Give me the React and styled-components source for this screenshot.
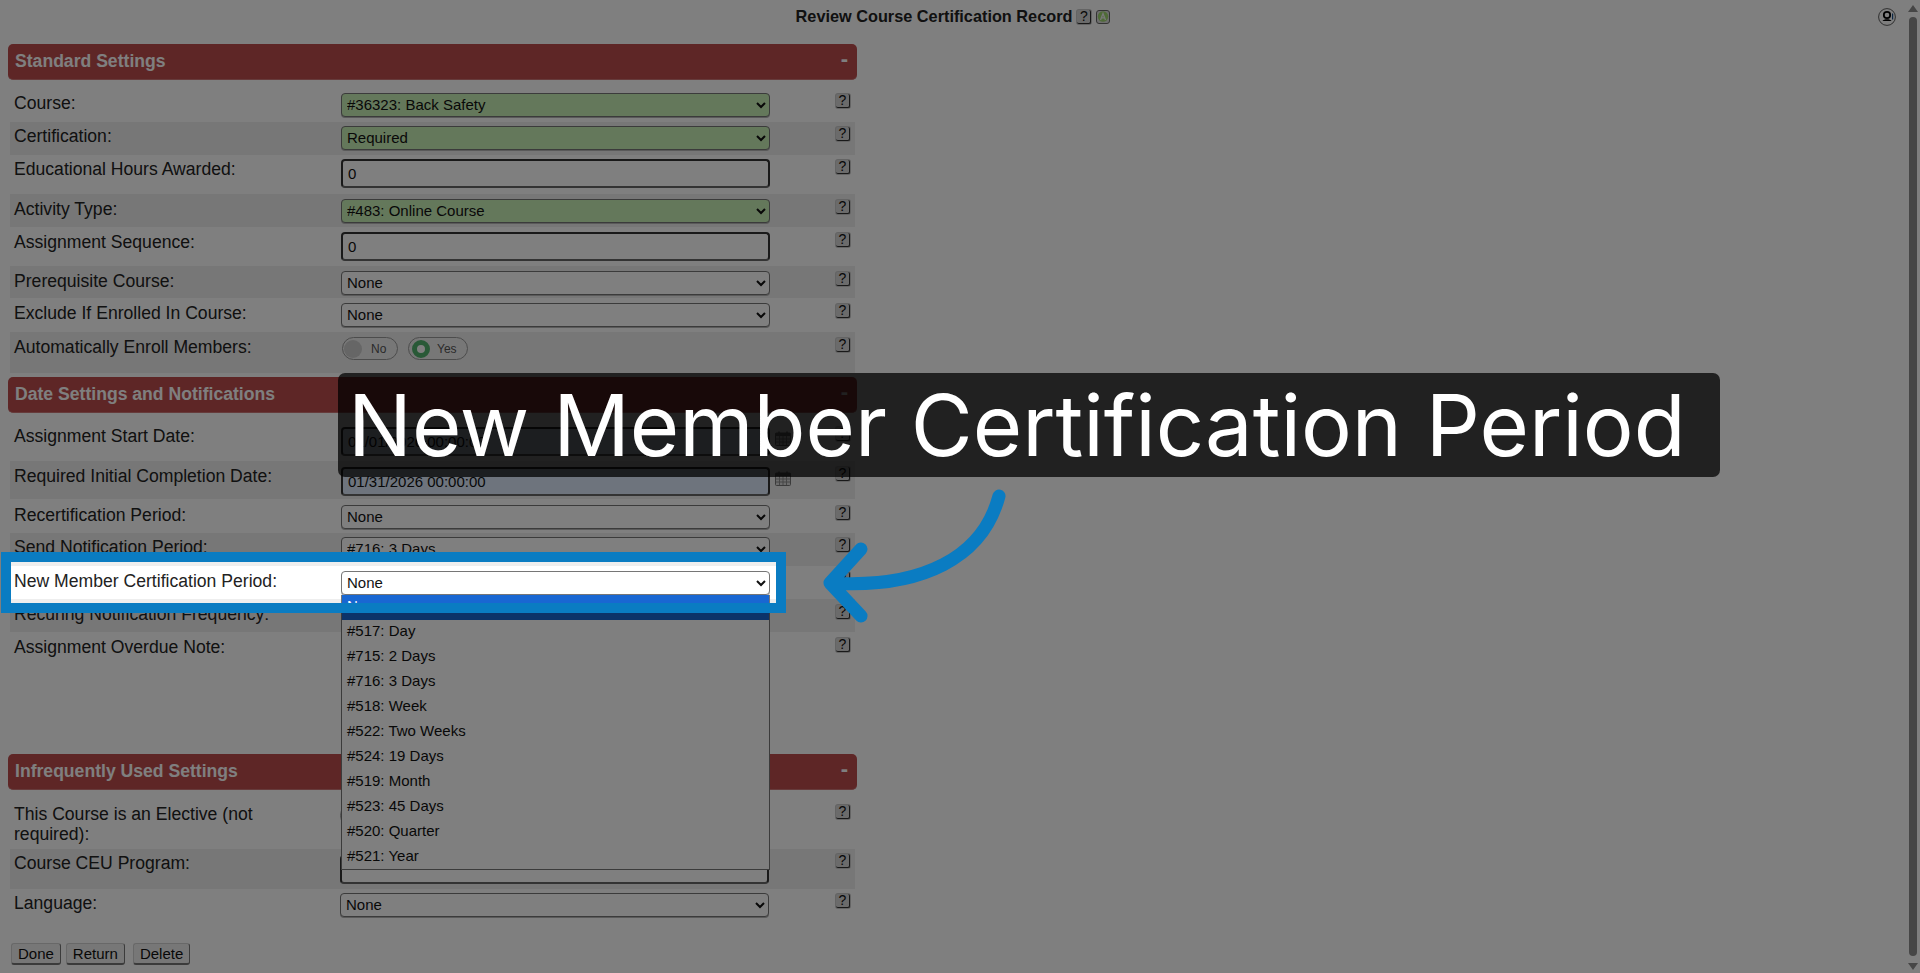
import styled, { createGlobalStyle } from "styled-components";

const GlobalStyle = createGlobalStyle`
  html, body {
    margin: 0;
    padding: 0;
    height: 100%;
    overflow: hidden;
    background: #ffffff;
    font-family: "Liberation Sans", Arial, sans-serif;
    color: #222222;
  }
`;

const standardRows = [
  { label: "Course:", kind: "select", value: "#36323: Back Safety", green: true, h: 33, pad: 4 },
  { label: "Certification:", kind: "select", value: "Required", green: true, h: 33, pad: 4, alt: true },
  { label: "Educational Hours Awarded:", kind: "input", value: "0", h: 39, pad: 4 },
  { label: "Activity Type:", kind: "select", value: "#483: Online Course", green: true, h: 33, pad: 5, alt: true },
  { label: "Assignment Sequence:", kind: "input", value: "0", h: 39, pad: 5 },
  { label: "Prerequisite Course:", kind: "select", value: "None", h: 32, pad: 5, alt: true },
  { label: "Exclude If Enrolled In Course:", kind: "select", value: "None", h: 34, pad: 5 },
  { label: "Automatically Enroll Members:", kind: "toggle", h: 41, pad: 5, alt: true },
];

const dateRows = [
  { label: "Assignment Start Date:", kind: "date", value: "01/01/2026 00:00:00", h: 40, pad: 5 },
  { label: "Required Initial Completion Date:", kind: "date", value: "01/31/2026 00:00:00", h: 38, pad: 5, alt: true },
  { label: "Recertification Period:", kind: "select", value: "None", h: 34, pad: 6 },
  { label: "Send Notification Period:", kind: "select", value: "#716: 3 Days", h: 33, pad: 4, alt: true },
  { label: "New Member Certification Period:", kind: "open", value: "None", h: 33, pad: 5 },
  { label: "Recuring Notification Frequency:", kind: "select", value: "None", h: 33, pad: 5, alt: true },
  { label: "Assignment Overdue Note:", kind: "textarea", h: 113, pad: 5 },
];

const infrequentRows = [
  { label: "This Course is an Elective (not required):", kind: "toggle", h: 50, pad: 5, labelW: 329 },
  { label: "Course CEU Program:", kind: "input", value: "", h: 40, pad: 4, alt: true, nudge: 2, labelW: 330 },
  { label: "Language:", kind: "select", value: "None", h: 32, pad: 4, labelW: 330 },
];

const periodOptions = [
  "None",
  "#517: Day",
  "#715: 2 Days",
  "#716: 3 Days",
  "#518: Week",
  "#522: Two Weeks",
  "#524: 19 Days",
  "#519: Month",
  "#523: 45 Days",
  "#520: Quarter",
  "#521: Year",
];

const HelpButton = ({ inline }) => <Help $inline={inline}>?</Help>;

const CalendarIcon = () => (
  <CalendarSvg viewBox="0 0 16 15">
    <rect x="0.5" y="2" width="15" height="12.5" rx="1" fill="#d8d8d8" stroke="#777" />
    <rect x="0.5" y="2" width="15" height="3" fill="#777" />
    <path d="M4 0.5v3M12 0.5v3" stroke="#777" strokeWidth="1.5" />
    <path d="M1 8h14M1 11h14M4.5 5v9M8 5v9M11.5 5v9" stroke="#8c8c8c" strokeWidth="1" />
  </CalendarSvg>
);

const Control = ({ row }) => {
  if (row.kind === "toggle") {
    return (
      <ToggleGroup>
        <Toggle>
          <Knob />
          No
        </Toggle>
        <Toggle $wide>
          <Knob $on />
          Yes
        </Toggle>
      </ToggleGroup>
    );
  }
  if (row.kind === "input") {
    return <TextInput defaultValue={row.value} style={row.nudge ? { marginTop: row.nudge } : undefined} />;
  }
  if (row.kind === "date") {
    return (
      <DateWrap>
        <TextInput $date defaultValue={row.value} />
        <CalendarIcon />
      </DateWrap>
    );
  }
  if (row.kind === "textarea") {
    return <NoteArea />;
  }
  return (
    <SelectWrap>
      <Select $green={row.green} defaultValue={row.value}>
        <option>{row.value}</option>
      </Select>
      {row.kind === "open" && (
        <OptionList>
          {periodOptions.map((option, index) => (
            <OptionItem key={option} $active={index === 0}>
              {option}
            </OptionItem>
          ))}
        </OptionList>
      )}
    </SelectWrap>
  );
};

const Section = ({ title, rows, gap }) => (
  <>
    <SectionHeader>
      <span>{title}</span>
      <Collapse>-</Collapse>
    </SectionHeader>
    <Rows $gap={gap}>
      {rows.map((row) => (
        <Row key={row.label} $alt={row.alt} $h={row.h} $pad={row.pad}>
          <Label $w={row.labelW}>{row.label}</Label>
          <Control row={row} />
          <HelpButton />
        </Row>
      ))}
    </Rows>
  </>
);

const App = () => {
  return (
    <Page>
      <GlobalStyle />
      <TopBar>
        <Title>Review Course Certification Record</Title>
        <HelpButton inline />
        <BadgeIcon viewBox="0 0 14 14">
          <rect x="0.5" y="0.5" width="13" height="13" rx="2.5" fill="#dcdcdc" stroke="#666" />
          <circle cx="7" cy="6.5" r="5.2" fill="#9fd66f" />
          <path d="M4.5 10L7 3.5L9.5 10M5.5 7.8h3" fill="none" stroke="#f2f2f2" strokeWidth="1.3" />
        </BadgeIcon>
        <AccountIcon viewBox="0 0 18 18">
          <circle cx="9" cy="9" r="8.4" fill="none" stroke="#333" strokeWidth="0.8" />
          <circle cx="9" cy="7" r="3.2" fill="none" stroke="#000" strokeWidth="1.8" />
          <path d="M4.5 13c1-2.5 8-2.5 9 0z" fill="#000" />
          <path d="M14.6 5.5v6" stroke="#1a4f8a" strokeWidth="1.2" />
        </AccountIcon>
      </TopBar>

      <Form>
        <Section title="Standard Settings" rows={standardRows} gap={9} />
        <SectionSpacer $h={4} />
        <Section title="Date Settings and Notifications" rows={dateRows} gap={8} />
        <SectionSpacer $h={9} />
        <Section title="Infrequently Used Settings" rows={infrequentRows} gap={9} />
        <Actions>
          <ActionButton>Done</ActionButton>
          <ActionButton>Return</ActionButton>
          <ActionButton $ml={3}>Delete</ActionButton>
        </Actions>
      </Form>

      <Scrollbar>
        <ScrollUp />
        <ScrollThumb />
        <ScrollDown />
      </Scrollbar>

      <Spotlight />
      <Caption>New Member Certification Period</Caption>
      <Arrow viewBox="0 0 220 150">
        <path
          d="M186 9C170 70 110 102 17 96M48 62L17 96L48 129"
          fill="none"
          stroke="#0a7cc2"
          strokeWidth="13"
          strokeLinecap="round"
          strokeLinejoin="round"
        />
      </Arrow>
    </Page>
  );
};

export default App;

const Page = styled.div`
  position: relative;
  width: 1920px;
  height: 973px;
  overflow: hidden;
  background: #ffffff;
`;

const TopBar = styled.div`
  position: relative;
  display: flex;
  align-items: center;
  justify-content: center;
  gap: 5px;
  width: 1906px;
  height: 33px;
  margin-bottom: 11px;
`;

const Title = styled.h1`
  margin: 0;
  font-size: 16.3px;
  font-weight: 700;
  color: #222222;
`;

const Help = styled.span`
  display: block;
  box-sizing: border-box;
  flex: none;
  width: 14px;
  height: 14px;
  margin-top: ${(props) => (props.$inline ? "0" : "1px")};
  margin-left: ${(props) => (props.$inline ? "0" : "auto")};
  background: #d6d6d6;
  border-right: 1px solid #333333;
  border-bottom: 1px solid #333333;
  border-radius: 2px;
  box-shadow: 0 0 0 1px #c8c8c8;
  font-size: 14px;
  font-weight: 400;
  line-height: 13px;
  text-align: center;
  color: #111111;
`;

const BadgeIcon = styled.svg`
  width: 14px;
  height: 14px;
`;

const AccountIcon = styled.svg`
  position: absolute;
  top: 8px;
  left: 1878px;
  width: 18px;
  height: 18px;
`;

const Form = styled.div`
  width: 849px;
  margin-left: 8px;
`;

const SectionHeader = styled.div`
  display: flex;
  align-items: center;
  justify-content: space-between;
  box-sizing: border-box;
  height: 36px;
  padding: 0 9px 0 7px;
  background: #bc4c4c;
  border-radius: 5px;
  border-bottom: 1px solid #cc7777;
  font-size: 17.6px;
  font-weight: 700;
  color: #ffffff;
`;

const Collapse = styled.span`
  margin-top: -5px;
  font-size: 22px;
  line-height: 22px;
`;

const SectionSpacer = styled.div`
  height: ${(props) => props.$h}px;
`;

const Rows = styled.div`
  display: flex;
  flex-direction: column;
  margin: ${(props) => props.$gap}px 2px 0;
`;

const Row = styled.div`
  display: flex;
  align-items: flex-start;
  box-sizing: border-box;
  height: ${(props) => props.$h}px;
  padding: ${(props) => props.$pad}px 5px 0 0;
  background: ${(props) => (props.$alt ? "#eeeeee" : "transparent")};
`;

const Label = styled.div`
  box-sizing: border-box;
  flex: none;
  width: ${(props) => props.$w || 331}px;
  padding: 0 52px 0 4px;
  font-size: 17.6px;
  line-height: 20px;
  color: #222222;
`;

const SelectWrap = styled.div`
  position: relative;
  flex: none;
  width: 429px;
`;

const Select = styled.select`
  display: block;
  box-sizing: border-box;
  width: 429px;
  height: 24px;
  padding: 0 0 1px 1px;
  background-color: ${(props) => (props.$green ? "#c9f0b6" : "#ffffff")};
  border: 1px solid #767676;
  border-radius: 4px;
  box-shadow: 0 1px 0 #b4b4b4;
  font-family: "Liberation Sans", Arial, sans-serif;
  font-size: 15px;
  color: #111111;
`;

const OptionList = styled.div`
  position: absolute;
  z-index: 1;
  top: 24px;
  left: 0;
  box-sizing: border-box;
  width: 429px;
  height: 275px;
  overflow: hidden;
  background: #ffffff;
  border: 1px solid #767676;
  border-top: none;
  font-size: 15px;
`;

const OptionItem = styled.div`
  height: 25px;
  padding-left: 5px;
  line-height: 21px;
  background: ${(props) => (props.$active ? "#1967d2" : "transparent")};
  color: ${(props) => (props.$active ? "#ffffff" : "#111111")};
`;

const TextInput = styled.input`
  display: block;
  box-sizing: border-box;
  flex: none;
  width: 429px;
  height: 29px;
  margin-top: ${(props) => (props.$date ? "1px" : "0")};
  padding: 0 5px;
  background: ${(props) => (props.$date ? "#dce9fb" : "#ffffff")};
  border: 2px solid #333333;
  border-bottom-color: #666666;
  border-radius: 4px;
  font-family: "Liberation Sans", Arial, sans-serif;
  font-size: 15px;
  color: #111111;
`;

const DateWrap = styled.div`
  display: flex;
  flex: none;
  align-items: flex-start;
  width: 429px;
`;

const CalendarSvg = styled.svg`
  flex: none;
  width: 16px;
  height: 15px;
  margin: 5px 0 0 5px;
`;

const NoteArea = styled.textarea`
  display: block;
  box-sizing: border-box;
  flex: none;
  width: 429px;
  height: 100px;
  resize: none;
  border: 2px solid #333333;
  border-radius: 4px;
`;

const ToggleGroup = styled.div`
  display: flex;
  flex: none;
  gap: 10px;
  width: 429px;
  margin-left: 1px;
`;

const Toggle = styled.div`
  display: flex;
  align-items: center;
  gap: ${(props) => (props.$wide ? "7px" : "9px")};
  box-sizing: border-box;
  width: ${(props) => (props.$wide ? "60px" : "56px")};
  height: 23px;
  padding: 0 0 0 ${(props) => (props.$wide ? "3px" : "1px")};
  border: 1px solid #999999;
  border-radius: 12px;
  font-size: 12px;
  color: #555555;
`;

const Knob = styled.span`
  display: block;
  box-sizing: border-box;
  flex: none;
  width: 18px;
  height: 18px;
  border-radius: 50%;
  background: ${(props) => (props.$on ? "#ffffff" : "#cccccc")};
  border: ${(props) => (props.$on ? "5px solid #52b36f" : "none")};
`;

const Actions = styled.div`
  display: flex;
  gap: 5px;
  margin: 22px 0 0 3px;
`;

const ActionButton = styled.button`
  box-sizing: border-box;
  height: 22px;
  margin-left: ${(props) => props.$ml || 0}px;
  padding: 0 6px;
  background: #efefef;
  border: 1px solid #d0d0d0;
  border-right-color: #777777;
  border-bottom: 2px solid #777777;
  border-radius: 3px;
  font-family: "Liberation Sans", Arial, sans-serif;
  font-size: 15px;
  color: #111111;
`;

const Scrollbar = styled.div`
  position: absolute;
  top: 5px;
  left: 1908px;
  display: flex;
  flex-direction: column;
  align-items: center;
  justify-content: space-between;
  width: 10px;
  height: 965px;
`;

const ScrollUp = styled.div`
  width: 0;
  height: 0;
  border-left: 5px solid transparent;
  border-right: 5px solid transparent;
  border-bottom: 7px solid #8c8c8c;
`;

const ScrollDown = styled(ScrollUp)`
  transform: rotate(180deg);
`;

const ScrollThumb = styled.div`
  flex: 1;
  width: 8px;
  margin: 5px 0 7px;
  background: #8c8c8c;
  border-radius: 4px;
`;

const Spotlight = styled.div`
  position: absolute;
  z-index: 2;
  top: 552px;
  left: 1px;
  box-sizing: border-box;
  width: 785px;
  height: 61px;
  border: 10px solid #0a7cc2;
  box-shadow: 0 0 0 3000px rgba(0, 0, 0, 0.5);
`;

const Caption = styled.div`
  position: absolute;
  z-index: 3;
  top: 373px;
  left: 338px;
  display: flex;
  align-items: center;
  box-sizing: border-box;
  width: 1382px;
  height: 104px;
  padding-left: 10px;
  background: rgba(0, 0, 0, 0.74);
  border-radius: 7px;
  font-family: Inter, "Liberation Sans", sans-serif;
  font-size: 84.85px;
  white-space: nowrap;
  color: #ffffff;
`;

const Arrow = styled.svg`
  position: absolute;
  z-index: 3;
  top: 487px;
  left: 813px;
  width: 220px;
  height: 150px;
`;
